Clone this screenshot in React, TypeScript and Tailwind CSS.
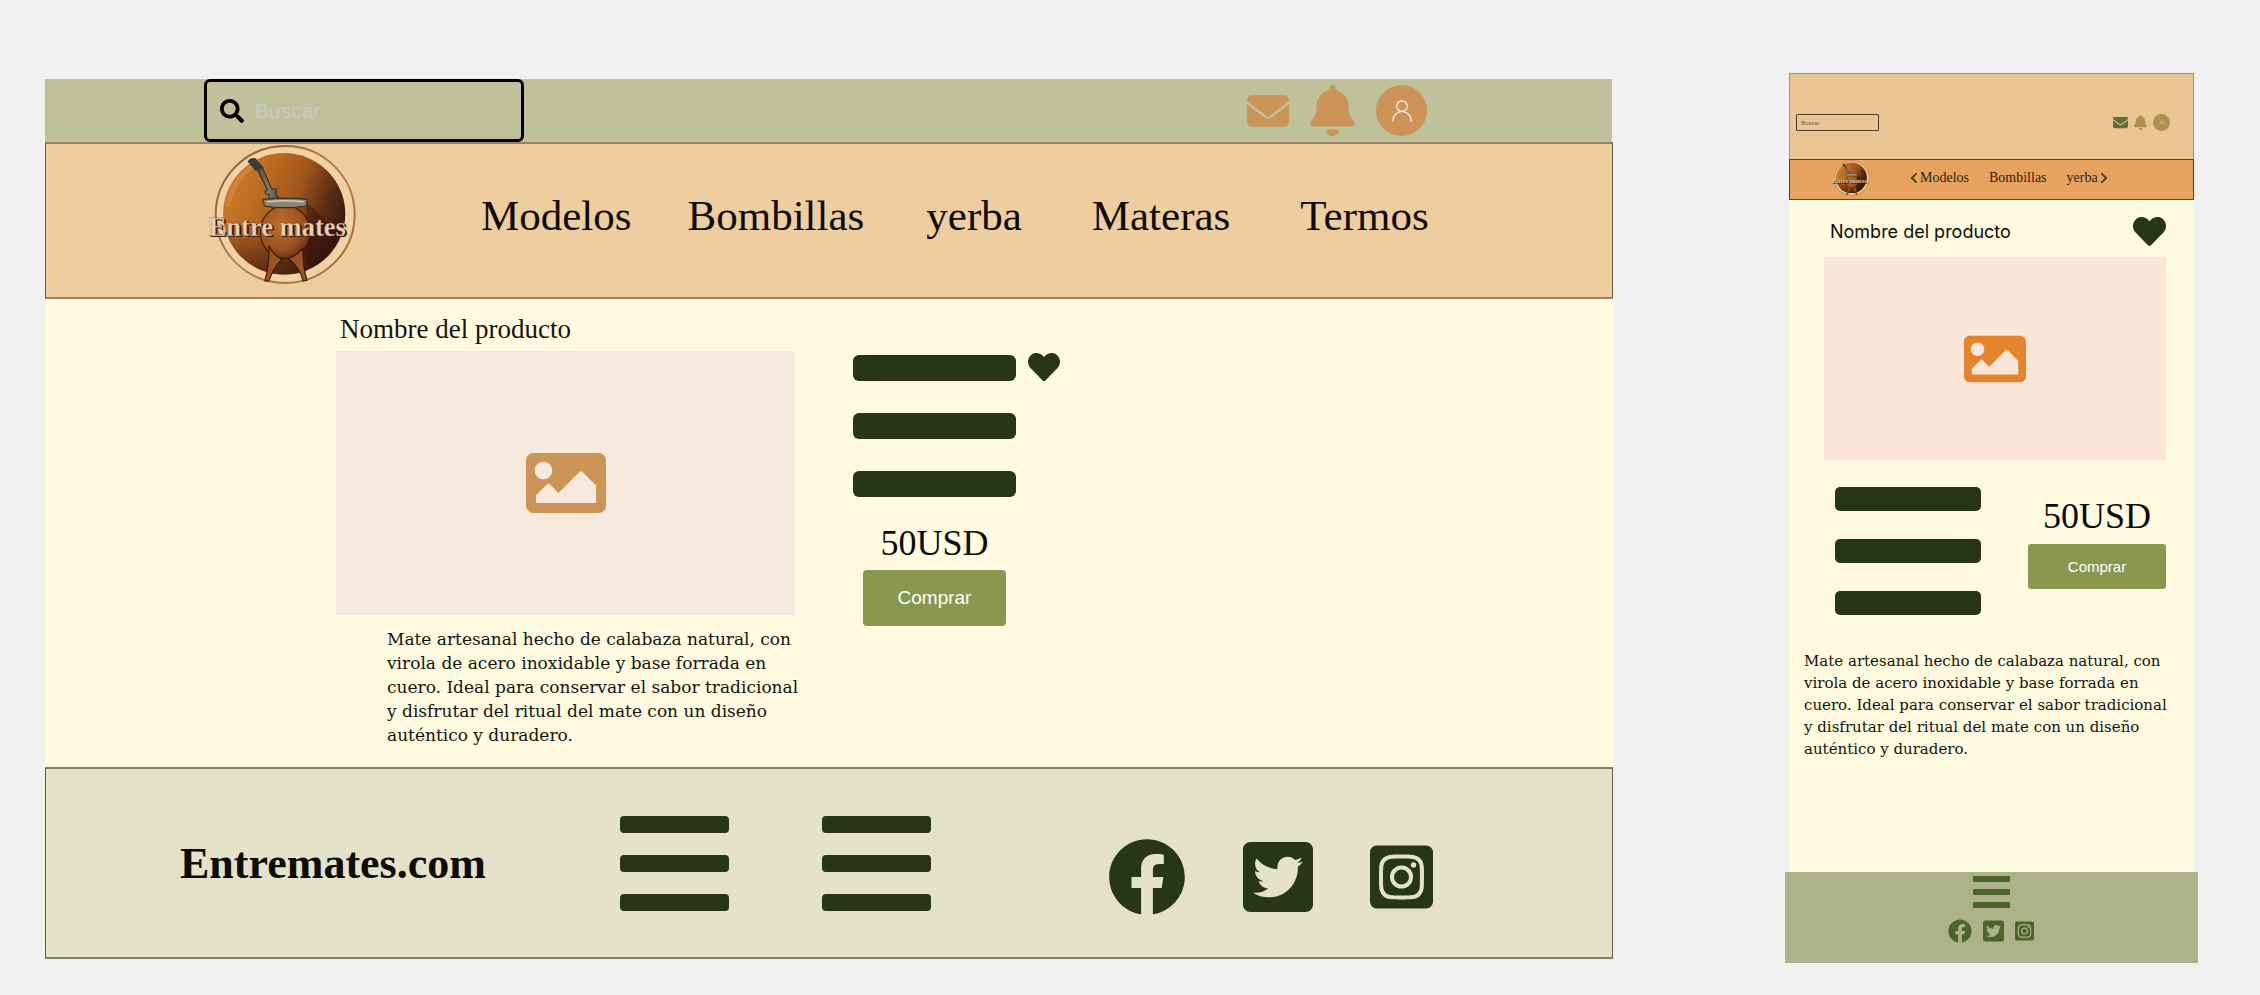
import { useId } from "react";
import {
  FaBell,
  FaChevronLeft,
  FaChevronRight,
  FaFacebook,
  FaHeart,
  FaImage,
  FaInstagramSquare,
  FaSearch,
  FaTwitterSquare,
} from "react-icons/fa";
import { FaEnvelope } from "react-icons/fa6";

const SERIF = "font-['Liberation_Serif',serif]";
const SLAB = "font-['DejaVu_Serif',serif]";
const SANS = "font-['Liberation_Sans',sans-serif]";

const DESCRIPTION = [
  "Mate artesanal hecho de calabaza natural, con",
  "virola de acero inoxidable y base forrada en",
  "cuero. Ideal para conservar el sabor tradicional",
  "y disfrutar del ritual del mate con un diseño",
  "auténtico y duradero.",
].join("\n");

function Logo({ className }: { className: string }) {
  const id = useId();
  return (
    <svg viewBox="0 0 450 420" className={className} role="img" aria-label="Entre mates">
      <defs>
        <linearGradient id={`${id}disc`} x1="0" y1="0.25" x2="1" y2="0.65">
          <stop offset="0" stopColor="#c97a2e" />
          <stop offset="0.3" stopColor="#bd6a20" />
          <stop offset="0.55" stopColor="#a0551b" />
          <stop offset="0.78" stopColor="#5f2d13" />
          <stop offset="1" stopColor="#32160d" />
        </linearGradient>
        <linearGradient id={`${id}shade`} x1="0" y1="0" x2="0" y2="1">
          <stop offset="0.55" stopColor="#3a180b" stopOpacity="0" />
          <stop offset="1" stopColor="#3a180b" stopOpacity="0.7" />
        </linearGradient>
        <radialGradient id={`${id}gourd`} cx="0.4" cy="0.35" r="0.75">
          <stop offset="0" stopColor="#bd6d2c" />
          <stop offset="0.65" stopColor="#9a4f1d" />
          <stop offset="1" stopColor="#552610" />
        </radialGradient>
        <linearGradient id={`${id}ring`} x1="0" y1="0" x2="1" y2="1">
          <stop offset="0" stopColor="#8a5526" />
          <stop offset="0.5" stopColor="#b98046" />
          <stop offset="1" stopColor="#a06a35" />
        </linearGradient>
        <linearGradient id={`${id}metal`} x1="0" y1="0" x2="1" y2="0">
          <stop offset="0" stopColor="#4a463e" />
          <stop offset="0.5" stopColor="#7d7867" />
          <stop offset="1" stopColor="#4a463e" />
        </linearGradient>
      </defs>
      <ellipse cx="233" cy="210" rx="207" ry="204" fill="#f3d5a8" fillOpacity="0.6" />
      <ellipse cx="233" cy="210" rx="207" ry="204" fill="none" stroke={`url(#${id}ring)`} strokeWidth="6" />
      <ellipse cx="230" cy="208" rx="182" ry="181" fill={`url(#${id}disc)`} />
      <ellipse cx="230" cy="208" rx="182" ry="181" fill={`url(#${id}shade)`} />
      <path d="M62 180 Q78 110 130 70" fill="none" stroke="#e0994f" strokeOpacity="0.4" strokeWidth="14" strokeLinecap="round" />
      <path d="M298 176 L392 262 Q380 330 310 368 L290 330 Z" fill="#2a100a" fillOpacity="0.45" />
      <ellipse cx="233" cy="262" rx="74" ry="79" fill={`url(#${id}gourd)`} stroke="#35170b" strokeWidth="3" />
      <path d="M185 303 Q196 330 223 344 Q200 366 184 408 L172 408 Q186 362 185 303 Z" fill="#9a5220" stroke="#2c140a" strokeWidth="3" />
      <path d="M286 311 Q284 360 298 406 L286 408 Q276 366 243 342 Q266 332 286 311 Z" fill="#9a5220" stroke="#2c140a" strokeWidth="3" />
      <path d="M150 76 L165 70 L193 134 L206 134 L208 144 L203 147 L219 166 L188 166 L185 151 L174 148 L173 140 L180 137 Z" fill={`url(#${id}metal)`} stroke="#2f2b25" strokeWidth="3" />
      <path d="M121 52 Q128 40 144 42 L169 70 L145 80 Z" fill="#3b3a32" />
      <path d="M167 165 Q232 158 299 165 L295 185 Q232 194 171 185 Z" fill="#8d8775" stroke="#3a342a" strokeWidth="4" strokeLinejoin="round" />
      <path d="M178 172 Q232 166 288 172" fill="none" stroke="#d2cab2" strokeWidth="5" />
      <g className="font-['Liberation_Serif',serif] font-bold" fontSize="79">
        <text x="10" y="278" fill="#2b160d">Entre mates</text>
        <text x="5" y="274" fill="#e9d3b4" stroke="#6a4a30" strokeWidth="1">Entre mates</text>
      </g>
      <path d="M24 223 Q2 222 5 240 Q9 250 18 244" fill="none" stroke="#e0c8a8" strokeWidth="7" />
    </svg>
  );
}

function UserGlyph({ className }: { className: string }) {
  return (
    <svg viewBox="0 0 20 22" className={className} fill="none" stroke="white" strokeWidth="1.1" aria-hidden="true">
      <circle cx="10" cy="6.2" r="5.3" />
      <path d="M0.8 21.5 V20.7 A9.2 9.2 0 0 1 19.2 20.7 V21.5" />
    </svg>
  );
}

function Bars({ className, bar }: { className: string; bar: string }) {
  return (
    <div className={`flex flex-col ${className}`} aria-hidden="true">
      <span className={bar} />
      <span className={bar} />
      <span className={bar} />
    </div>
  );
}

function DesktopView() {
  return (
    <section className="flex min-w-0 flex-1 flex-col pt-[79px]" aria-label="Escritorio">
      <div className="mr-px flex h-[63px] items-stretch bg-[#bfc19b] pl-[159px] pr-[185px]">
        <div className="flex w-[320px] items-center gap-[11px] rounded-[6px] border-3 border-black pl-[13px]">
          <FaSearch className="size-6 shrink-0 text-black" aria-hidden="true" />
          <input
            type="search"
            aria-label="Buscar"
            placeholder="Buscar"
            className={`${SANS} w-full min-w-0 bg-transparent text-[21px] leading-7 outline-none placeholder:text-[#c7c9c6]`}
          />
        </div>
        <div className="ml-auto flex items-center gap-[21px] text-[#cd9457]">
          <button type="button" aria-label="Mensajes">
            <FaEnvelope className="size-[42px]" />
          </button>
          <button type="button" aria-label="Notificaciones">
            <FaBell className="h-[51px] w-[45px]" />
          </button>
          <button
            type="button"
            aria-label="Perfil"
            className="flex size-[51px] items-center justify-center rounded-full bg-[#cd9457]"
          >
            <UserGlyph className="h-[22px] w-5" />
          </button>
        </div>
      </div>

      <header className="flex h-[157px] items-start border-x border-y-2 border-x-[#6b5d47] border-y-[#94836a] bg-[#eecd9e] pl-[161px]">
        <a href="#inicio" className="shrink-0">
          <Logo className="h-[141px] w-[151px]" />
        </a>
        <nav className={`${SERIF} ml-[123px] flex pt-[48px] text-[43px] leading-[48px] text-[#0d0b06]`}>
          <a href="#modelos">Modelos</a>
          <a href="#bombillas" className="ml-14">Bombillas</a>
          <a href="#yerba" className="ml-[62px]">yerba</a>
          <a href="#materas" className="ml-[70px]">Materas</a>
          <a href="#termos" className="ml-[70px]">Termos</a>
        </nav>
      </header>

      <main className="flex gap-[58px] bg-[#fefae0] pb-5 pl-[291px] pt-[14px]">
        <div className="w-[459px]">
          <h1 className={`${SERIF} pl-1 text-[27px] leading-8 text-[#14140d]`}>Nombre del producto</h1>
          <div className="mt-1.5 flex h-[264px] items-center justify-center bg-[#f6eade] text-[#cc9556]">
            <FaImage className="size-20" role="img" aria-label="Imagen del producto" />
          </div>
          <p className={`${SLAB} mt-3 whitespace-pre pl-[51px] text-[17px] leading-6 text-[#14140d]`}>{DESCRIPTION}</p>
        </div>
        <div className="flex items-start gap-3">
          <div className="flex w-[163px] flex-col items-center pt-[42px]">
            <Bars className="w-full gap-8" bar="h-[26px] rounded-[6px] bg-[#283618]" />
            <p className={`${SERIF} mt-[26px] text-[36px] leading-10 text-[#0d0b06]`}>50USD</p>
            <button
              type="button"
              className={`${SANS} mt-[7px] h-14 w-[143px] rounded-[4px] bg-[#8a984f] text-[19px] leading-6 text-white`}
            >
              Comprar
            </button>
          </div>
          <button type="button" aria-label="Favorito" className="mt-[38px] text-[#283618]">
            <FaHeart className="size-8" />
          </button>
        </div>
      </main>

      <footer className="flex h-48 items-start border-x border-y-2 border-x-[#5d604f] border-y-[#7c7e69] bg-[#e4e2c8] pl-[134px] pr-[179px] pt-[47px]">
        <p className={`${SERIF} mt-[22px] text-[44px] font-bold leading-[52px] text-[#0d0d08]`}>Entremates.com</p>
        <Bars className="ml-[134px] w-[109px] gap-[22px]" bar="h-[17px] rounded-[4px] bg-[#283618]" />
        <Bars className="ml-[93px] w-[109px] gap-[22px]" bar="h-[17px] rounded-[4px] bg-[#283618]" />
        <div className="ml-auto flex items-center gap-[57px] pt-[21px] text-[#283618]">
          <a href="#facebook" aria-label="Facebook">
            <FaFacebook className="size-[78px]" />
          </a>
          <a href="#twitter" aria-label="Twitter">
            <FaTwitterSquare className="h-20 w-[70px]" />
          </a>
          <a href="#instagram" aria-label="Instagram">
            <FaInstagramSquare className="h-[72px] w-[63px]" />
          </a>
        </div>
      </footer>
    </section>
  );
}

function MobileView() {
  return (
    <section className="flex w-[413px] shrink-0 flex-col pt-[73px]" aria-label="Móvil">
      <div className="mx-1 flex h-[86px] items-start border border-b-0 border-[#a4937c] bg-[#ebc594] pl-1.5 pr-[23px] pt-10">
        <div className="flex h-[17px] w-[83px] items-center rounded-[1px] border border-[#4a3d28] pl-1">
          <input
            type="search"
            aria-label="Buscar"
            placeholder="Buscar"
            className={`${SANS} w-full min-w-0 bg-transparent text-[6px] leading-2 outline-none placeholder:text-[#6d5a40]`}
          />
        </div>
        <div className="ml-auto flex items-center gap-1.5 text-[#ae904f]">
          <button type="button" aria-label="Mensajes" className="text-[#5f6f35]">
            <FaEnvelope className="size-[15px]" />
          </button>
          <button type="button" aria-label="Notificaciones">
            <FaBell className="h-[15px] w-[13px]" />
          </button>
          <button
            type="button"
            aria-label="Perfil"
            className="flex size-[17px] items-center justify-center rounded-full bg-[#ae904f]"
          >
            <UserGlyph className="h-[7px] w-1.5 opacity-70" />
          </button>
        </div>
      </div>

      <header className="mx-1 flex h-[41px] items-start border border-[#5f4422] bg-[#e8a25f] pl-[42px]">
        <a href="#inicio" className="shrink-0">
          <Logo className="h-9 w-[38px]" />
        </a>
        <nav className={`${SERIF} ml-10 flex items-center pt-2 text-[14px] leading-5 text-[#33230f]`}>
          <button type="button" aria-label="Anterior" className="mr-0.5 text-[#3c4a12]">
            <FaChevronLeft className="h-3 w-2" />
          </button>
          <a href="#modelos">Modelos</a>
          <a href="#bombillas" className="ml-5">Bombillas</a>
          <a href="#yerba" className="ml-5">yerba</a>
          <button type="button" aria-label="Siguiente" className="ml-0.5 text-[#3c4a12]">
            <FaChevronRight className="h-3 w-2" />
          </button>
        </nav>
      </header>

      <main className="mx-1 flex h-[672px] flex-col bg-[#fefae0] pl-[35px] pr-7 pt-[15px]">
        <div className="flex items-center justify-between pl-1.5">
          <h2 className="font-['Inter',sans-serif] text-[18px] leading-6 text-[#0d0d08]">Nombre del producto</h2>
          <button type="button" aria-label="Favorito" className="text-[#283618]">
            <FaHeart className="size-[33px]" />
          </button>
        </div>
        <div className="mt-[9px] flex h-[203px] items-center justify-center bg-[#f9e6d6] text-[#e4842c]">
          <FaImage className="size-[62px]" role="img" aria-label="Imagen del producto" />
        </div>
        <div className="flex items-start justify-between pl-[11px] pt-[27px]">
          <Bars className="w-[146px] gap-7" bar="h-6 rounded-[5px] bg-[#283618]" />
          <div className="flex w-[138px] flex-col items-center pt-[9px]">
            <p className={`${SERIF} text-[36px] leading-10 text-[#0d0b06]`}>50USD</p>
            <button
              type="button"
              className={`${SANS} mt-2 h-[45px] w-full rounded-[3px] bg-[#8a984f] text-[15px] leading-5 text-white`}
            >
              Comprar
            </button>
          </div>
        </div>
        <p className={`${SLAB} -ml-5 mt-[35px] whitespace-pre text-[15px] leading-[22px] text-[#14140d]`}>{DESCRIPTION}</p>
      </main>

      <footer className="flex h-[91px] flex-col items-center bg-[#adb28a] pt-1">
        <Bars className="w-[37px] gap-[7px]" bar="h-1.5 rounded-[1px] bg-[#4b652a]" />
        <div className="mt-[11px] flex items-center gap-[11px] pr-0.5 text-[#4b652a]">
          <a href="#facebook" aria-label="Facebook">
            <FaFacebook className="size-6" />
          </a>
          <a href="#twitter" aria-label="Twitter">
            <FaTwitterSquare className="h-6 w-[21px]" />
          </a>
          <a href="#instagram" aria-label="Instagram">
            <FaInstagramSquare className="h-[22px] w-[19px]" />
          </a>
        </div>
      </footer>
    </section>
  );
}

export default function App() {
  return (
    <div className="flex min-h-screen items-start gap-[172px] bg-[#f1f1f1] pl-[45px] pr-[62px] [&_a]:block [&_button]:block [&_button.flex]:flex">
      <DesktopView />
      <MobileView />
    </div>
  );
}
